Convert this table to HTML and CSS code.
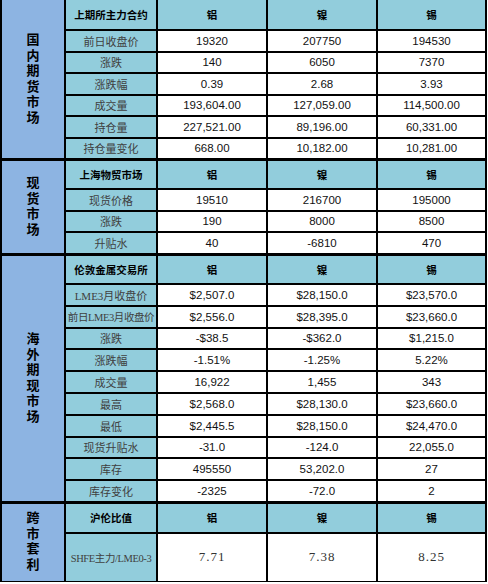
FILE: index.html
```html
<!DOCTYPE html>
<html lang="zh-CN">
<head>
<meta charset="utf-8">
<title>金属行情</title>
<link rel="stylesheet" href="styles.css">
</head>
<body>
<div class="sheet">
  <section class="sec s1">
    <div class="label"><span>国内期货市场</span></div>
    <div class="hd">上期所主力合约</div><div class="hd">铝</div><div class="hd">镍</div><div class="hd">锡</div>
    <div class="nm">前日收盘价</div><div class="v">19320</div><div class="v">207750</div><div class="v">194530</div>
    <div class="nm">涨跌</div><div class="v">140</div><div class="v">6050</div><div class="v">7370</div>
    <div class="nm">涨跌幅</div><div class="v">0.39</div><div class="v">2.68</div><div class="v">3.93</div>
    <div class="nm">成交量</div><div class="v">193,604.00</div><div class="v">127,059.00</div><div class="v">114,500.00</div>
    <div class="nm">持仓量</div><div class="v">227,521.00</div><div class="v">89,196.00</div><div class="v">60,331.00</div>
    <div class="nm">持仓量变化</div><div class="v">668.00</div><div class="v">10,182.00</div><div class="v">10,281.00</div>
  </section>
  <section class="sec s2">
    <div class="label"><span>现货市场</span></div>
    <div class="hd">上海物贸市场</div><div class="hd">铝</div><div class="hd">镍</div><div class="hd">锡</div>
    <div class="nm">现货价格</div><div class="v">19510</div><div class="v">216700</div><div class="v">195000</div>
    <div class="nm">涨跌</div><div class="v">190</div><div class="v">8000</div><div class="v">8500</div>
    <div class="nm">升贴水</div><div class="v">40</div><div class="v">-6810</div><div class="v">470</div>
  </section>
  <section class="sec s3">
    <div class="label"><span>海外期现市场</span></div>
    <div class="hd">伦敦金属交易所</div><div class="hd">铝</div><div class="hd">镍</div><div class="hd">锡</div>
    <div class="nm">LME3月收盘价</div><div class="v">$2,507.0</div><div class="v">$28,150.0</div><div class="v">$23,570.0</div>
    <div class="nm tight">前日LME3月收盘价</div><div class="v">$2,556.0</div><div class="v">$28,395.0</div><div class="v">$23,660.0</div>
    <div class="nm">涨跌</div><div class="v">-$38.5</div><div class="v">-$362.0</div><div class="v">$1,215.0</div>
    <div class="nm">涨跌幅</div><div class="v">-1.51%</div><div class="v">-1.25%</div><div class="v">5.22%</div>
    <div class="nm">成交量</div><div class="v">16,922</div><div class="v">1,455</div><div class="v">343</div>
    <div class="nm">最高</div><div class="v">$2,568.0</div><div class="v">$28,130.0</div><div class="v">$23,660.0</div>
    <div class="nm">最低</div><div class="v">$2,445.5</div><div class="v">$28,150.0</div><div class="v">$24,470.0</div>
    <div class="nm">现货升贴水</div><div class="v">-31.0</div><div class="v">-124.0</div><div class="v">22,055.0</div>
    <div class="nm">库存</div><div class="v">495550</div><div class="v">53,202.0</div><div class="v">27</div>
    <div class="nm">库存变化</div><div class="v">-2325</div><div class="v">-72.0</div><div class="v">2</div>
  </section>
  <section class="sec s4">
    <div class="label"><span>跨市套利</span></div>
    <div class="hd">沪伦比值</div><div class="hd">铝</div><div class="hd">镍</div><div class="hd">锡</div>
    <div class="nm tight">SHFE主力/LME0-3</div><div class="v ratio">7.71</div><div class="v ratio">7.38</div><div class="v ratio">8.25</div>
  </section>
</div>
</body>
</html>
```
FILE: styles.css
```css
html, body {
  margin: 0;
  padding: 0;
  background: #ffffff;
}

.sheet {
  width: 483px;
  background: #000000;
  padding: 0 2px 2px 2px;
  display: flex;
  flex-direction: column;
  gap: 3px;
}

.sec {
  display: grid;
  grid-template-columns: 62px 90px 108px 108px 107px;
  gap: 2px;
}

.s1 { grid-template-rows: 29px repeat(6, 19.5px); }
.s2 { grid-template-rows: 27px repeat(3, 19.67px); }
.s3 { grid-template-rows: 27px repeat(10, 19.8px); }
.s4 { grid-template-rows: 28px 47px; margin-bottom: -1px; }

.sec > div {
  display: flex;
  align-items: center;
  justify-content: center;
  white-space: nowrap;
  overflow: hidden;
}

.label {
  grid-row: 1 / -1;
  background: #8db4e2;
  color: #000;
  font-family: "Noto Sans CJK SC", sans-serif;
  font-weight: 700;
  font-size: 13px;
}

.label span {
  writing-mode: vertical-rl;
  letter-spacing: 2.5px;
  line-height: 13px;
}

.hd {
  background: #92cddc;
  color: #000;
  font-family: "Noto Sans CJK SC", sans-serif;
  font-weight: 700;
  font-size: 10.5px;
}

.nm {
  background: #92cddc;
  color: #404040;
  font-family: "Liberation Serif", "Noto Sans CJK SC", serif;
  font-size: 11px;
}

.tight {
  font-size: 10.5px;
  letter-spacing: -0.4px;
}

.v {
  background: #ffffff;
  color: #111;
  font-family: "Liberation Sans", Arial, sans-serif;
  font-size: 11.5px;
}

.ratio {
  font-family: "Liberation Serif", serif;
  font-size: 13px;
  color: #333;
  letter-spacing: 1px;
}
```
